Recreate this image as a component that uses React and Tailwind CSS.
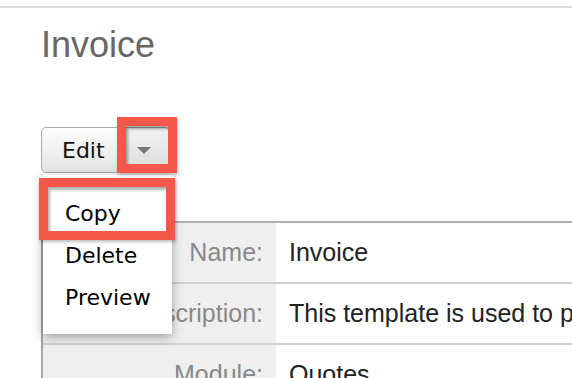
import React from "react";

const rows = [
  { label: "Name:", value: "Invoice" },
  { label: "Description:", value: "This template is used to produce invoices for customers." },
  { label: "Module:", value: "Quotes" },
];

export default function App() {
  return (
    <div className="w-[572px] h-[378px] overflow-hidden bg-white">
      <div className="mt-[6px] h-[2px] bg-[#d9dde0]" />

      <div className="pl-[41px]">
        <h1 className="mt-[19px] text-[36px] leading-[36px] text-[#666] font-['Liberation_Sans',Arial,sans-serif]">
          Invoice
        </h1>

        <div className="relative mt-[64px] flex h-[46px] w-fit font-['DejaVu_Sans',sans-serif]">
          <button className="flex h-full w-[77px] items-center rounded-l-[5px] border border-[#aaa] bg-gradient-to-b from-[#fdfdfd] to-[#e4e4e4] pl-[20px] text-[22px] text-[#111]">
            Edit
          </button>
          <button className="flex h-full w-[52px] items-center justify-center rounded-r-[5px] border border-l-0 border-[#aaa] bg-gradient-to-b from-[#f2f2f2] to-[#dcdcdc]">
            <span className="h-0 w-0 border-l-[7px] border-r-[7px] border-t-[7px] border-l-transparent border-r-transparent border-t-[#777]" />
          </button>

          {/* red highlight around the dropdown toggle */}
          <div className="absolute left-[76px] top-[-10px] z-20 h-[56px] w-[60px] border-[9px] border-[#f4584a] shadow-[inset_2px_3px_3px_rgba(0,0,0,0.35),1px_2px_3px_rgba(0,0,0,0.25)]" />

          {/* dropdown menu */}
          <div className="absolute left-[2px] top-[48px] z-10 w-[129px] bg-white pt-[18px] pb-[15px] shadow-[0_3px_10px_rgba(0,0,0,0.35)]">
            {["Copy", "Delete", "Preview"].map((item) => (
              <div key={item} className="h-[42px] pl-[22px] text-[22px] leading-[42px] text-black">
                {item}
              </div>
            ))}
          </div>

          {/* red highlight around Copy */}
          <div className="absolute left-[-2px] top-[51px] z-20 h-[62px] w-[136px] border-[9px] border-[#f4584a] shadow-[inset_2px_3px_3px_rgba(0,0,0,0.3),1px_2px_3px_rgba(0,0,0,0.25)]" />
        </div>
      </div>

      <div className="ml-[41px] mt-[48px] border-l-2 border-t-2 border-l-[#a5a5a5] border-t-[#b0b0b0] font-['Liberation_Sans',Arial,sans-serif] text-[25px]">
        {rows.map((row) => (
          <div key={row.label} className="flex h-[61px] border-b-2 border-[#cfcfcf]">
            <div className="w-[233px] shrink-0 bg-[#efefef] pr-[13px] text-right leading-[59px] text-[#888]">
              {row.label}
            </div>
            <div className="whitespace-nowrap pl-[13px] leading-[59px] text-[#222]">
              {row.value}
            </div>
          </div>
        ))}
      </div>
    </div>
  );
}
